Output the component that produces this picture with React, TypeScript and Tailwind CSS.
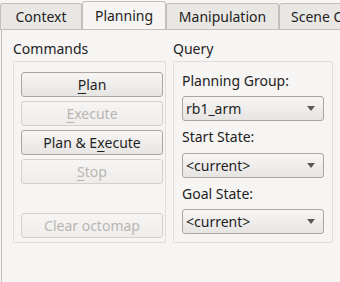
import React from 'react';

const font = { fontFamily: '"Noto Sans", "Open Sans", sans-serif' };

const Tab: React.FC<{ label: string; active?: boolean; w: string }> = ({ label, active, w }) => {
  if (active) {
    return (
      <div className={`${w} h-[29px] -mb-px shrink-0 bg-[#f7f5f3] border border-b-0 border-[#c3bfba] rounded-t-[3px] flex items-center justify-center text-[#222] relative z-10`}>
        {label}
      </div>
    );
  }
  return (
    <div className={`${w} h-[26px] bg-[#e9e7e3] border border-b-0 border-[#c3bfba] rounded-t-[3px] flex items-center justify-center text-[#222] shrink-0 whitespace-nowrap overflow-hidden`}>
      {label}
    </div>
  );
};

const Btn: React.FC<{ children: React.ReactNode; disabled?: boolean }> = ({ children, disabled }) => (
  <div
    className={`h-[25px] rounded-[3px] border flex items-center justify-center ${
      disabled
        ? 'border-[#d4d1cd] bg-gradient-to-b from-[#f6f5f4] to-[#eeedeb] text-[#b9b6b2]'
        : 'border-[#a9a6a2] bg-gradient-to-b from-[#f7f6f5] to-[#e7e5e2] text-[#1f1f1f]'
    }`}
  >
    {children}
  </div>
);

const Select: React.FC<{ value: string }> = ({ value }) => (
  <div className="h-[25px] rounded-[3px] border border-[#a9a6a2] bg-gradient-to-b from-[#f7f6f5] to-[#e7e5e2] flex items-center justify-between pl-[3px] pr-[8px] text-[#1f1f1f]">
    <span>{value}</span>
    <svg width="8" height="5" viewBox="0 0 8 5">
      <path d="M0 0 H8 L4 5 Z" fill="#5b5a58" />
    </svg>
  </div>
);

const U: React.FC<{ children: React.ReactNode }> = ({ children }) => (
  <span className="underline underline-offset-[3px] decoration-1">{children}</span>
);

export default function App() {
  return (
    <div className="w-[340px] h-[282px] bg-[#f7f5f3] overflow-hidden text-[14px] leading-[18px]" style={font}>
      {/* tab bar */}
      <div className="h-[30px] flex items-end bg-[#f7f5f3] border-b border-[#c3bfba] overflow-hidden">
        <Tab label="Context" w="w-[82px]" />
        <Tab label="Planning" w="w-[84px]" active />
        <Tab label="Manipulation" w="w-[113px]" />
        <div className="h-[26px] w-[80px] shrink-0 bg-[#e9e7e3] border border-b-0 border-[#c3bfba] rounded-t-[3px] flex items-center pl-[11px] text-[#222] whitespace-nowrap overflow-hidden">
          Scene Objects
        </div>
      </div>

      {/* pane */}
      <div className="h-[252px] ml-[1px] border-l border-[#c3bfba] pl-[11px] pt-[10px] flex gap-[7px]">
        <div className="w-[153px] flex flex-col">
          <div className="h-[18px] mb-[3px] text-[#222]">Commands</div>
          <div className="h-[182px] border border-[#e0ddd9] rounded-[2px] pl-[7px] pr-[2px] pt-[10px] flex flex-col gap-[4px]">
            <Btn><U>P</U>lan</Btn>
            <Btn disabled><U>E</U>xecute</Btn>
            <Btn>Plan &amp; E<U>x</U>ecute</Btn>
            <Btn disabled><U>S</U>top</Btn>
            <div className="h-[21px]" />
            <Btn disabled>Clear octomap</Btn>
          </div>
        </div>
        <div className="w-[160px] flex flex-col">
          <div className="h-[18px] mb-[3px] text-[#222]">Query</div>
          <div className="h-[182px] border border-[#e0ddd9] rounded-[2px] pl-[8px] pr-[8px] pt-[4px] flex flex-col text-[#222]">
            <div className="h-[30px] flex items-center">Planning Group:</div>
            <Select value="rb1_arm" />
            <div className="h-[32px] flex items-center">Start State:</div>
            <Select value="<current>" />
            <div className="h-[31px] flex items-center">Goal State:</div>
            <Select value="<current>" />
          </div>
        </div>
      </div>
    </div>
  );
}
